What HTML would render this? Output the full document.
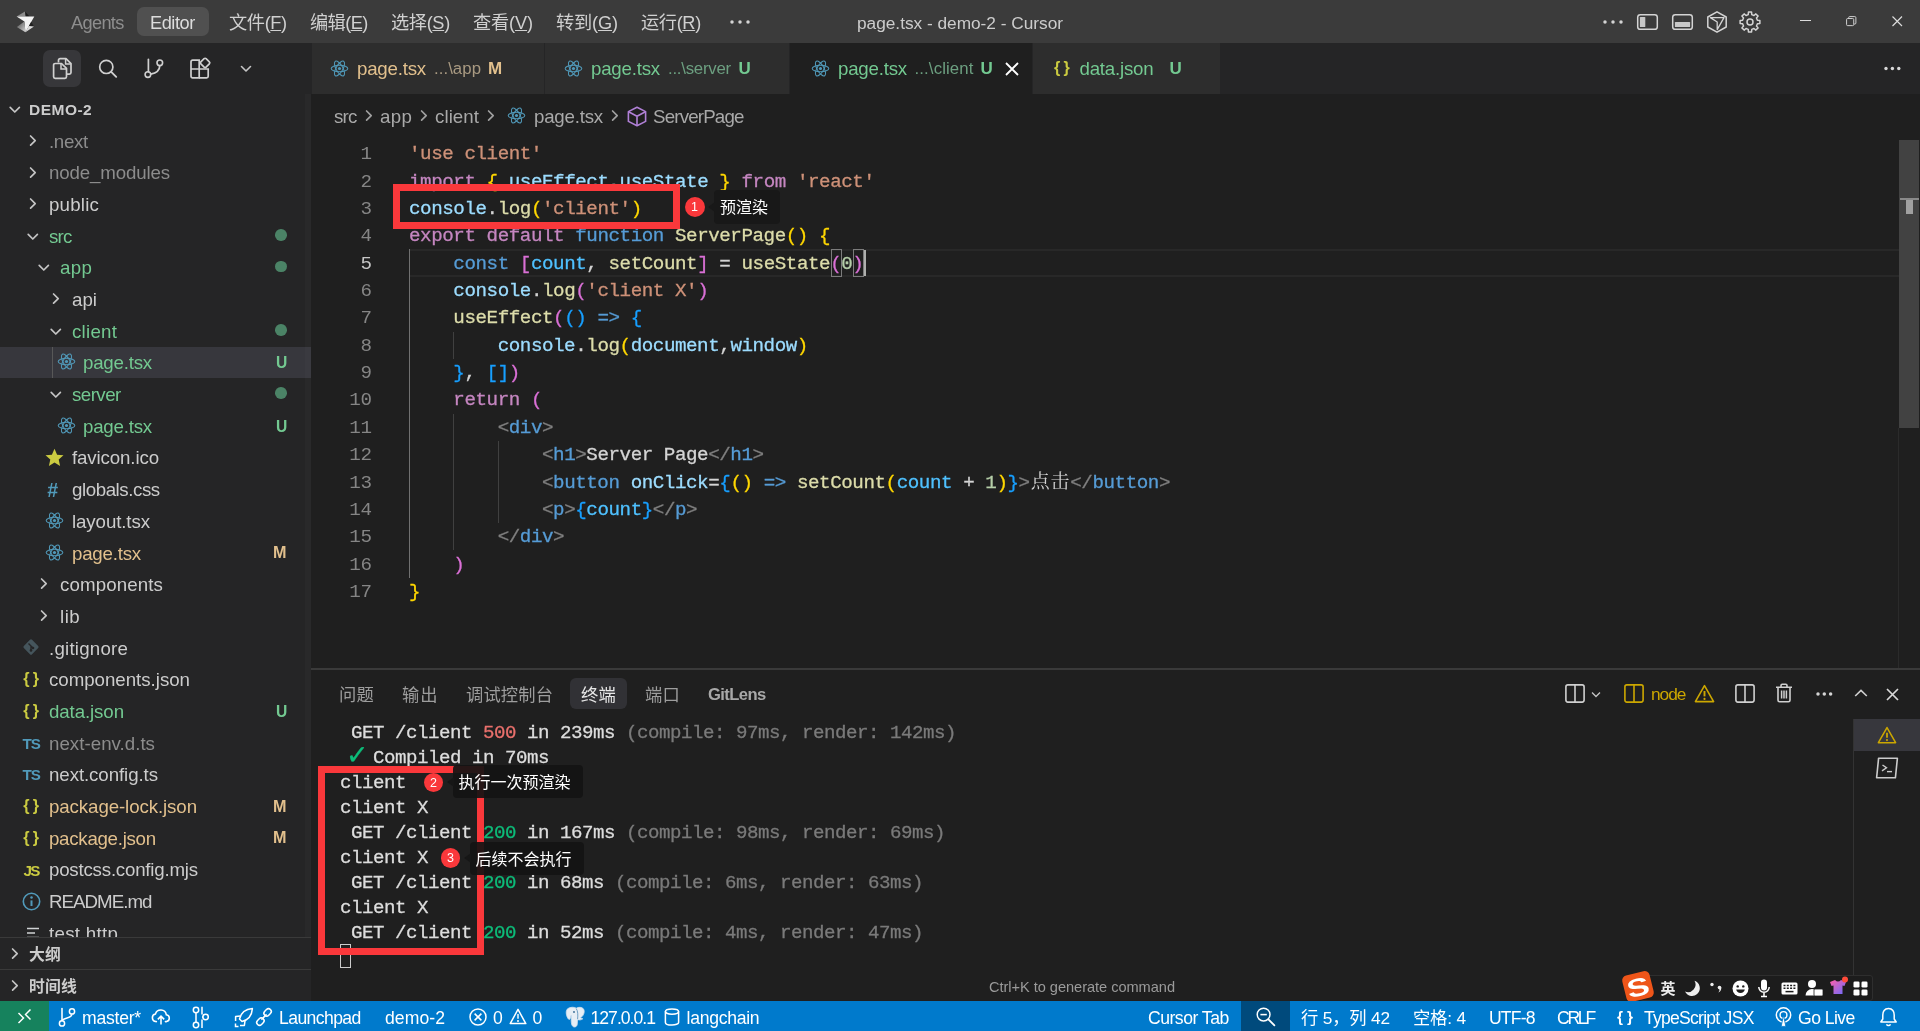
<!DOCTYPE html>
<html lang="zh-CN"><head><meta charset="utf-8"><title>page.tsx - demo-2 - Cursor</title>
<style>
html,body{margin:0;padding:0}
body{width:1920px;height:1031px;overflow:hidden;position:relative;background:#1f1f1f;font-family:"Liberation Sans","Noto Sans CJK SC",sans-serif;color:#cccccc}
div,span,svg{position:absolute;box-sizing:border-box}
.t{white-space:pre;display:block}
svg{overflow:visible}
.code span,.term span{position:static}
.code div,.term div{white-space:pre}
.titlebar,.sidebar,.editor,.panel,.statusbar{will-change:transform}

</style></head>
<body>
<div class="titlebar" style="left:0;top:0;width:1920px;height:43px;background:#3b3b3b">
<svg style="left:0px;top:0px" width="44" height="43" viewBox="0 0 44 43" fill="none" ><defs><linearGradient id="lg1" x1="0" y1="0" x2="1" y2="1"><stop offset="0" stop-color="#4a4a4a"/><stop offset="1" stop-color="#d6d6d6"/></linearGradient></defs><path d="M25 11.5 L16.6 16.6 L26 16.6 Z" fill="#8c8c8c"/><path d="M25 11.5 L25.6 16.6 L29.5 16.6 Z" fill="#1c1c1c"/><path d="M16.6 16.4 L34.3 16.4 L30.6 23 L25.4 32.2 L24.4 21.4 Z" fill="#f4f4f4"/><path d="M24.4 21.4 L16.8 27 L25.4 32.2 Z" fill="url(#lg1)"/><path d="M31.2 21.8 L34 26.5 L28.8 26.2 Z" fill="#202020"/><path d="M28.8 26 L34 26.5 L25.4 32.2 Z" fill="#dcdcdc"/></svg>
<span class="t" style="left:71px;top:10.5px;height:25px;line-height:25px;font-size:18.2px;color:#8e8e8e;letter-spacing:-0.659px;">Agents</span>
<div style="left:137px;top:7px;width:72px;height:29px;background:#505050;border-radius:7px"></div>
<span class="t" style="left:150px;top:10.5px;height:25px;line-height:25px;font-size:18.2px;color:#dcdcdc;letter-spacing:-0.457px;">Editor</span>
<span class="t" style="left:229px;top:10.5px;height:25px;line-height:25px;font-size:18.2px;color:#d0d0d0;letter-spacing:-0.361px;">文件(<u>F</u>)</span>
<span class="t" style="left:310px;top:10.5px;height:25px;line-height:25px;font-size:18.2px;color:#d0d0d0;letter-spacing:-0.587px;">编辑(<u>E</u>)</span>
<span class="t" style="left:391px;top:10.5px;height:25px;line-height:25px;font-size:18.2px;color:#d0d0d0;letter-spacing:-0.365px;">选择(<u>S</u>)</span>
<span class="t" style="left:473px;top:10.5px;height:25px;line-height:25px;font-size:18.2px;color:#d0d0d0;letter-spacing:-0.142px;">查看(<u>V</u>)</span>
<span class="t" style="left:556px;top:10.5px;height:25px;line-height:25px;font-size:18.2px;color:#d0d0d0;letter-spacing:-0.146px;">转到(<u>G</u>)</span>
<span class="t" style="left:641px;top:10.5px;height:25px;line-height:25px;font-size:18.2px;color:#d0d0d0;letter-spacing:-0.365px;">运行(<u>R</u>)</span>
<svg style="left:730px;top:19px" width="20" height="6" viewBox="0 0 20 6" fill="none" ><circle cx="2" cy="3" r="1.75" fill="#d4d4d4"/><circle cx="10" cy="3" r="1.75" fill="#d4d4d4"/><circle cx="18" cy="3" r="1.75" fill="#d4d4d4"/></svg>
<span class="t" style="left:857px;top:11.0px;height:24px;line-height:24px;font-size:17.3px;color:#cccccc;letter-spacing:-0.020px;">page.tsx - demo-2 - Cursor</span>
<svg style="left:1603px;top:18.5px" width="20" height="6" viewBox="0 0 20 6" fill="none" ><circle cx="2" cy="3" r="1.75" fill="#d4d4d4"/><circle cx="10" cy="3" r="1.75" fill="#d4d4d4"/><circle cx="18" cy="3" r="1.75" fill="#d4d4d4"/></svg>
<svg style="left:1637px;top:14px" width="21" height="16" viewBox="0 0 21 16" fill="none" ><rect x="0.7" y="0.7" width="19.6" height="14.6" rx="2.6" stroke="#d4d4d4" stroke-width="1.5"/><rect x="2.9" y="3" width="5.4" height="10" rx="0.6" fill="#c8c8c8"/></svg>
<svg style="left:1672px;top:14px" width="21" height="16" viewBox="0 0 21 16" fill="none" ><rect x="0.7" y="0.7" width="19.6" height="14.6" rx="2.6" stroke="#d4d4d4" stroke-width="1.5"/><rect x="2.9" y="8" width="15.2" height="5" rx="0.6" fill="#c8c8c8"/></svg>
<svg style="left:1706px;top:11px" width="22" height="22" viewBox="0 0 22 22" fill="none" ><path d="M11 0.8 L20.2 6 L20.2 16 L11 21.2 L1.8 16 L1.8 6 Z" stroke="#d4d4d4" stroke-width="1.5" stroke-linejoin="round"/><path d="M4.4 6.6 L18 6.6 L11.2 18.6 L11.2 11 Z" stroke="#d4d4d4" stroke-width="1.3" stroke-linejoin="round"/></svg>
<svg style="left:1739px;top:10.5px" width="22" height="22" viewBox="0 0 22 22" fill="none" ><path d="M9.23 3.61 L9.44 1.12 L12.56 1.12 L12.77 3.61 L14.97 4.52 L16.88 2.91 L19.09 5.12 L17.48 7.03 L18.39 9.23 L20.88 9.44 L20.88 12.56 L18.39 12.77 L17.48 14.97 L19.09 16.88 L16.88 19.09 L14.97 17.48 L12.77 18.39 L12.56 20.88 L9.44 20.88 L9.23 18.39 L7.03 17.48 L5.12 19.09 L2.91 16.88 L4.52 14.97 L3.61 12.77 L1.12 12.56 L1.12 9.44 L3.61 9.23 L4.52 7.03 L2.91 5.12 L5.12 2.91 L7.03 4.52 Z" stroke="#d4d4d4" stroke-width="1.5" stroke-linejoin="round"/><circle cx="11" cy="11" r="3" stroke="#d4d4d4" stroke-width="1.5"/></svg>
<div style="left:1800px;top:20px;width:10.5px;height:1.1px;background:#dcdcdc;"></div>
<svg style="left:1845.5px;top:15.8px" width="10.8" height="10.8" viewBox="0 0 13 13" fill="none" ><rect x="0.7" y="3" width="8.6" height="8.6" rx="1.3" stroke="#cfcfcf" stroke-width="1.2"/><path d="M3.2 3 V2 a1.3 1.3 0 0 1 1.3 -1.3 H10.6 a1.3 1.3 0 0 1 1.3 1.3 V8.4 a1.3 1.3 0 0 1 -1.3 1.3 H9.6" stroke="#cfcfcf" stroke-width="1.2"/></svg>
<svg style="left:1892px;top:16px" width="10.5" height="10.5" viewBox="0 0 10.5 10.5" fill="none" ><path d="M0.5 0.5 L10 10 M10 0.5 L0.5 10" stroke="#dcdcdc" stroke-width="1.15"/></svg>
</div>
<div class="sidebar" style="left:0;top:43px;width:311px;height:958px;background:#252526">
<div style="left:43px;top:7px;width:38px;height:37px;background:#37373a;border-radius:7px"></div>
<svg style="left:51px;top:14px" width="22" height="23" viewBox="0 0 22 23" fill="none" ><path d="M7.5 5.5 V3.2 a1.6 1.6 0 0 1 1.6 -1.6 H15 L20 6.6 V15.6 a1.6 1.6 0 0 1 -1.6 1.6 H16" stroke="#d0d0d0" stroke-width="1.7" stroke-linejoin="round"/><path d="M14.6 1.8 V7 H19.8" stroke="#d0d0d0" stroke-width="1.5"/><path d="M2.6 8.1 a1.6 1.6 0 0 1 1.6 -1.6 H10.5 L15.5 11.4 V19.8 a1.6 1.6 0 0 1 -1.6 1.6 H4.2 a1.6 1.6 0 0 1 -1.6 -1.6 Z" stroke="#d0d0d0" stroke-width="1.7" stroke-linejoin="round"/><path d="M10 6.8 V12 H15.2" stroke="#d0d0d0" stroke-width="1.5"/></svg>
<svg style="left:96px;top:13px" width="24" height="24" viewBox="0 0 24 24" fill="none" ><circle cx="10.3" cy="10.9" r="6.6" stroke="#d0d0d0" stroke-width="1.7"/><path d="M15.2 15.8 L20.2 20.8" stroke="#d0d0d0" stroke-width="1.9" stroke-linecap="round"/></svg>
<svg style="left:140px;top:13px" width="26" height="26" viewBox="0 0 26 26" fill="none" ><circle cx="7.9" cy="18.6" r="2.8" stroke="#d0d0d0" stroke-width="1.6"/><circle cx="19.8" cy="6.8" r="2.8" stroke="#d0d0d0" stroke-width="1.6"/><path d="M8.4 3.4 V15.8" stroke="#d0d0d0" stroke-width="1.7" stroke-linecap="round"/><path d="M19.8 9.6 C19.8 15 15 17.4 10.7 18.2" stroke="#d0d0d0" stroke-width="1.7"/></svg>
<svg style="left:189px;top:14px" width="23" height="23" viewBox="0 0 23 23" fill="none" ><path d="M2 4.8 a1.6 1.6 0 0 1 1.6 -1.6 H10.2 V20.8 H3.6 a1.6 1.6 0 0 1 -1.6 -1.6 Z" stroke="#d0d0d0" stroke-width="1.7"/><path d="M2 12 H19.2 V19.2 a1.6 1.6 0 0 1 -1.6 1.6 H10.2" stroke="#d0d0d0" stroke-width="1.7"/><rect x="12.4" y="2.2" width="7.4" height="7.4" rx="1.4" transform="rotate(45 16.1 5.9)" stroke="#d0d0d0" stroke-width="1.7"/></svg>
<svg style="left:240px;top:21px" width="12" height="10" viewBox="0 0 12 10" fill="none" ><path d="M1.5 2.5 L6 7 L10.5 2.5" stroke="#c5c5c5" stroke-width="1.6" stroke-linecap="round" stroke-linejoin="round"/></svg>
<div style="left:0px;top:303.6px;width:311px;height:31.68px;background:#37373d;"></div>
<div style="left:52px;top:303.6px;width:1px;height:31.68px;background:#585858;"></div>
<div style="left:0;top:51px;width:311px;height:843px;overflow:hidden"><div style="left:0;top:-51px;width:311px;height:900px">
<svg style="left:6.5px;top:59.3px" width="16" height="16" viewBox="0 0 16 16" fill="none" ><path d="M3.2 5.4 L7.8 10 L12.4 5.4" stroke="#c5c5c5" stroke-width="1.7" stroke-linecap="round" stroke-linejoin="round"/></svg>
<span class="t" style="left:29px;top:56.3px;height:22px;line-height:22px;font-size:15.5px;color:#cccccc;font-weight:700;letter-spacing:0.491px;">DEMO-2</span>
<svg style="left:24.9px;top:89.88000000000001px" width="16" height="16" viewBox="0 0 16 16" fill="none" ><path d="M5.6 3 L10.2 7.6 L5.6 12.2" stroke="#c5c5c5" stroke-width="1.7" stroke-linecap="round" stroke-linejoin="round"/></svg>
<span class="t" style="left:49px;top:85.68px;height:26px;line-height:26px;font-size:18.72px;color:#8c8c8c;letter-spacing:-0.347px;">.next</span>
<svg style="left:24.9px;top:121.56px" width="16" height="16" viewBox="0 0 16 16" fill="none" ><path d="M5.6 3 L10.2 7.6 L5.6 12.2" stroke="#c5c5c5" stroke-width="1.7" stroke-linecap="round" stroke-linejoin="round"/></svg>
<span class="t" style="left:49px;top:117.36px;height:26px;line-height:26px;font-size:18.72px;color:#8c8c8c;letter-spacing:-0.148px;">node_modules</span>
<svg style="left:24.9px;top:153.23999999999998px" width="16" height="16" viewBox="0 0 16 16" fill="none" ><path d="M5.6 3 L10.2 7.6 L5.6 12.2" stroke="#c5c5c5" stroke-width="1.7" stroke-linecap="round" stroke-linejoin="round"/></svg>
<span class="t" style="left:49px;top:149.04px;height:26px;line-height:26px;font-size:18.72px;color:#cccccc;letter-spacing:0.205px;">public</span>
<svg style="left:24.9px;top:185.52px" width="16" height="16" viewBox="0 0 16 16" fill="none" ><path d="M3.2 5.4 L7.8 10 L12.4 5.4" stroke="#c5c5c5" stroke-width="1.7" stroke-linecap="round" stroke-linejoin="round"/></svg>
<span class="t" style="left:49px;top:180.72px;height:26px;line-height:26px;font-size:18.72px;color:#73c991;letter-spacing:-0.775px;">src</span>
<div style="left:275.2px;top:186.01999999999998px;width:11.6px;height:11.6px;border-radius:50%;background:#4b8366"></div>
<svg style="left:36.4px;top:217.20000000000002px" width="16" height="16" viewBox="0 0 16 16" fill="none" ><path d="M3.2 5.4 L7.8 10 L12.4 5.4" stroke="#c5c5c5" stroke-width="1.7" stroke-linecap="round" stroke-linejoin="round"/></svg>
<span class="t" style="left:60px;top:212.4px;height:26px;line-height:26px;font-size:18.72px;color:#73c991;letter-spacing:0.312px;">app</span>
<div style="left:275.2px;top:217.7px;width:11.6px;height:11.6px;border-radius:50%;background:#4b8366"></div>
<svg style="left:47.9px;top:248.27999999999997px" width="16" height="16" viewBox="0 0 16 16" fill="none" ><path d="M5.6 3 L10.2 7.6 L5.6 12.2" stroke="#c5c5c5" stroke-width="1.7" stroke-linecap="round" stroke-linejoin="round"/></svg>
<span class="t" style="left:72px;top:244.08px;height:26px;line-height:26px;font-size:18.72px;color:#cccccc;letter-spacing:0.013px;">api</span>
<svg style="left:47.9px;top:280.56px" width="16" height="16" viewBox="0 0 16 16" fill="none" ><path d="M3.2 5.4 L7.8 10 L12.4 5.4" stroke="#c5c5c5" stroke-width="1.7" stroke-linecap="round" stroke-linejoin="round"/></svg>
<span class="t" style="left:72px;top:275.76px;height:26px;line-height:26px;font-size:18.72px;color:#73c991;letter-spacing:0.241px;">client</span>
<div style="left:275.2px;top:281.06px;width:11.6px;height:11.6px;border-radius:50%;background:#4b8366"></div>
<svg style="left:56.5px;top:309.44px" width="19.0" height="19.0" viewBox="0 0 24 24" fill="none" ><ellipse cx="12" cy="12" rx="10.5" ry="4.2" transform="rotate(0 12 12)" stroke="#519aba" stroke-width="1.3"/><ellipse cx="12" cy="12" rx="10.5" ry="4.2" transform="rotate(60 12 12)" stroke="#519aba" stroke-width="1.3"/><ellipse cx="12" cy="12" rx="10.5" ry="4.2" transform="rotate(120 12 12)" stroke="#519aba" stroke-width="1.3"/><circle cx="12" cy="12" r="2" fill="#519aba"/></svg>
<span class="t" style="left:83px;top:307.44px;height:26px;line-height:26px;font-size:18.72px;color:#73c991;letter-spacing:-0.227px;">page.tsx</span>
<span class="t" style="left:275.5px;top:308.24px;height:24px;line-height:24px;font-size:17px;color:#73c991;font-weight:700;transform:scaleX(.92);transform-origin:0 0;">U</span>
<svg style="left:47.9px;top:343.92px" width="16" height="16" viewBox="0 0 16 16" fill="none" ><path d="M3.2 5.4 L7.8 10 L12.4 5.4" stroke="#c5c5c5" stroke-width="1.7" stroke-linecap="round" stroke-linejoin="round"/></svg>
<span class="t" style="left:72px;top:339.12px;height:26px;line-height:26px;font-size:18.72px;color:#73c991;letter-spacing:-0.540px;">server</span>
<div style="left:275.2px;top:344.42px;width:11.6px;height:11.6px;border-radius:50%;background:#4b8366"></div>
<svg style="left:56.5px;top:372.8px" width="19.0" height="19.0" viewBox="0 0 24 24" fill="none" ><ellipse cx="12" cy="12" rx="10.5" ry="4.2" transform="rotate(0 12 12)" stroke="#519aba" stroke-width="1.3"/><ellipse cx="12" cy="12" rx="10.5" ry="4.2" transform="rotate(60 12 12)" stroke="#519aba" stroke-width="1.3"/><ellipse cx="12" cy="12" rx="10.5" ry="4.2" transform="rotate(120 12 12)" stroke="#519aba" stroke-width="1.3"/><circle cx="12" cy="12" r="2" fill="#519aba"/></svg>
<span class="t" style="left:83px;top:370.8px;height:26px;line-height:26px;font-size:18.72px;color:#73c991;letter-spacing:-0.227px;">page.tsx</span>
<span class="t" style="left:275.5px;top:371.6px;height:24px;line-height:24px;font-size:17px;color:#73c991;font-weight:700;transform:scaleX(.92);transform-origin:0 0;">U</span>
<svg style="left:45px;top:404.88px" width="19" height="19" viewBox="0 0 19 19" fill="none" ><path d="M9.5 0.8 L12.1 6.7 L18.5 7.3 L13.7 11.6 L15.1 17.9 L9.5 14.6 L3.9 17.9 L5.3 11.6 L0.5 7.3 L6.9 6.7 Z" fill="#cbcb41"/></svg>
<span class="t" style="left:72px;top:402.48px;height:26px;line-height:26px;font-size:18.72px;color:#cccccc;letter-spacing:-0.131px;">favicon.ico</span>
<span class="t" style="left:47px;top:433.56px;height:27px;line-height:27px;font-size:19.5px;color:#519aba;font-weight:700;font-style:italic;">#</span>
<span class="t" style="left:72px;top:434.16px;height:26px;line-height:26px;font-size:18.72px;color:#cccccc;letter-spacing:-0.432px;">globals.css</span>
<svg style="left:44.8px;top:467.84px" width="19.0" height="19.0" viewBox="0 0 24 24" fill="none" ><ellipse cx="12" cy="12" rx="10.5" ry="4.2" transform="rotate(0 12 12)" stroke="#519aba" stroke-width="1.3"/><ellipse cx="12" cy="12" rx="10.5" ry="4.2" transform="rotate(60 12 12)" stroke="#519aba" stroke-width="1.3"/><ellipse cx="12" cy="12" rx="10.5" ry="4.2" transform="rotate(120 12 12)" stroke="#519aba" stroke-width="1.3"/><circle cx="12" cy="12" r="2" fill="#519aba"/></svg>
<span class="t" style="left:72px;top:465.84px;height:26px;line-height:26px;font-size:18.72px;color:#cccccc;letter-spacing:-0.107px;">layout.tsx</span>
<svg style="left:44.8px;top:499.52px" width="19.0" height="19.0" viewBox="0 0 24 24" fill="none" ><ellipse cx="12" cy="12" rx="10.5" ry="4.2" transform="rotate(0 12 12)" stroke="#519aba" stroke-width="1.3"/><ellipse cx="12" cy="12" rx="10.5" ry="4.2" transform="rotate(60 12 12)" stroke="#519aba" stroke-width="1.3"/><ellipse cx="12" cy="12" rx="10.5" ry="4.2" transform="rotate(120 12 12)" stroke="#519aba" stroke-width="1.3"/><circle cx="12" cy="12" r="2" fill="#519aba"/></svg>
<span class="t" style="left:72px;top:497.52px;height:26px;line-height:26px;font-size:18.72px;color:#e2c08d;letter-spacing:-0.227px;">page.tsx</span>
<span class="t" style="left:273px;top:498.32px;height:24px;line-height:24px;font-size:17px;color:#e2c08d;font-weight:700;transform:scaleX(.95);transform-origin:0 0;">M</span>
<svg style="left:36.4px;top:533.4000000000001px" width="16" height="16" viewBox="0 0 16 16" fill="none" ><path d="M5.6 3 L10.2 7.6 L5.6 12.2" stroke="#c5c5c5" stroke-width="1.7" stroke-linecap="round" stroke-linejoin="round"/></svg>
<span class="t" style="left:60px;top:529.2px;height:26px;line-height:26px;font-size:18.72px;color:#cccccc;letter-spacing:0.117px;">components</span>
<svg style="left:36.4px;top:565.08px" width="16" height="16" viewBox="0 0 16 16" fill="none" ><path d="M5.6 3 L10.2 7.6 L5.6 12.2" stroke="#c5c5c5" stroke-width="1.7" stroke-linecap="round" stroke-linejoin="round"/></svg>
<span class="t" style="left:60px;top:560.88px;height:26px;line-height:26px;font-size:18.72px;color:#cccccc;letter-spacing:0.512px;">lib</span>
<svg style="left:22px;top:594.96px" width="18" height="18" viewBox="0 0 18 18" fill="none" ><rect x="3.2" y="3.2" width="11.6" height="11.6" rx="1.5" transform="rotate(45 9 9)" fill="#45555c"/><path d="M6.5 5.5 L11 10 M9 8 V12.5" stroke="#252526" stroke-width="1.4"/><circle cx="11" cy="10" r="1.3" fill="#252526"/><circle cx="9" cy="12.4" r="1.3" fill="#252526"/></svg>
<span class="t" style="left:49px;top:592.56px;height:26px;line-height:26px;font-size:18.72px;color:#cccccc;letter-spacing:0.215px;">.gitignore</span>
<span class="t" style="left:23.3px;top:624.34px;height:23px;line-height:23px;font-size:16.2px;color:#cbcb41;font-weight:700;letter-spacing:-0.644px;">{ }</span>
<span class="t" style="left:49px;top:624.24px;height:26px;line-height:26px;font-size:18.72px;color:#cccccc;letter-spacing:-0.028px;">components.json</span>
<span class="t" style="left:23.3px;top:656.02px;height:23px;line-height:23px;font-size:16.2px;color:#cbcb41;font-weight:700;letter-spacing:-0.644px;">{ }</span>
<span class="t" style="left:49px;top:655.92px;height:26px;line-height:26px;font-size:18.72px;color:#73c991;letter-spacing:-0.108px;">data.json</span>
<span class="t" style="left:275.5px;top:656.72px;height:24px;line-height:24px;font-size:17px;color:#73c991;font-weight:700;transform:scaleX(.92);transform-origin:0 0;">U</span>
<span class="t" style="left:22.5px;top:689.8px;height:21px;line-height:21px;font-size:15.2px;color:#519aba;font-weight:700;letter-spacing:-0.948px;">TS</span>
<span class="t" style="left:49px;top:687.6px;height:26px;line-height:26px;font-size:18.72px;color:#8c8c8c;letter-spacing:0.024px;">next-env.d.ts</span>
<span class="t" style="left:22.5px;top:721.48px;height:21px;line-height:21px;font-size:15.2px;color:#519aba;font-weight:700;letter-spacing:-0.948px;">TS</span>
<span class="t" style="left:49px;top:719.28px;height:26px;line-height:26px;font-size:18.72px;color:#cccccc;letter-spacing:-0.089px;">next.config.ts</span>
<span class="t" style="left:23.3px;top:751.06px;height:23px;line-height:23px;font-size:16.2px;color:#cbcb41;font-weight:700;letter-spacing:-0.644px;">{ }</span>
<span class="t" style="left:49px;top:750.96px;height:26px;line-height:26px;font-size:18.72px;color:#e2c08d;letter-spacing:-0.104px;">package-lock.json</span>
<span class="t" style="left:273px;top:751.76px;height:24px;line-height:24px;font-size:17px;color:#e2c08d;font-weight:700;transform:scaleX(.95);transform-origin:0 0;">M</span>
<span class="t" style="left:23.3px;top:782.74px;height:23px;line-height:23px;font-size:16.2px;color:#cbcb41;font-weight:700;letter-spacing:-0.644px;">{ }</span>
<span class="t" style="left:49px;top:782.64px;height:26px;line-height:26px;font-size:18.72px;color:#e2c08d;letter-spacing:-0.281px;">package.json</span>
<span class="t" style="left:273px;top:783.44px;height:24px;line-height:24px;font-size:17px;color:#e2c08d;font-weight:700;transform:scaleX(.95);transform-origin:0 0;">M</span>
<span class="t" style="left:23.5px;top:816.52px;height:21px;line-height:21px;font-size:15.2px;color:#cbcb41;font-weight:700;letter-spacing:-1.719px;">JS</span>
<span class="t" style="left:49px;top:814.32px;height:26px;line-height:26px;font-size:18.72px;color:#cccccc;letter-spacing:-0.217px;">postcss.config.mjs</span>
<svg style="left:22px;top:848.9px" width="19" height="19" viewBox="0 0 19 19" fill="none" ><circle cx="9.5" cy="9.5" r="8.2" stroke="#519aba" stroke-width="1.6"/><circle cx="9.5" cy="5.6" r="1.25" fill="#519aba"/><path d="M9.5 8.4 V14" stroke="#519aba" stroke-width="2"/></svg>
<span class="t" style="left:49px;top:846.0px;height:26px;line-height:26px;font-size:18.72px;color:#cccccc;letter-spacing:-0.965px;">README.md</span>
<svg style="left:27px;top:884.08px" width="13" height="12" viewBox="0 0 13 12" fill="none" ><path d="M0 1.5 H12 M0 6 H8 M0 10.5 H12" stroke="#cfd2d4" stroke-width="1.7"/></svg>
<span class="t" style="left:49px;top:877.68px;height:26px;line-height:26px;font-size:18.72px;color:#cccccc;letter-spacing:0.289px;">test.http</span>
</div></div>
<div style="left:305px;top:51px;width:6px;height:843px;background:rgba(255,255,255,0.02);"></div>
<div style="left:0px;top:894px;width:311px;height:1px;background:#3a3a3a;"></div>
<svg style="left:6.5px;top:903px" width="16" height="16" viewBox="0 0 16 16" fill="none" ><path d="M5.6 3 L10.2 7.6 L5.6 12.2" stroke="#c5c5c5" stroke-width="1.7" stroke-linecap="round" stroke-linejoin="round"/></svg>
<span class="t" style="left:29px;top:901.0px;height:22px;line-height:22px;font-size:15.84px;color:#cccccc;font-weight:700;letter-spacing:0.219px;">大纲</span>
<div style="left:0px;top:926px;width:311px;height:1px;background:#3a3a3a;"></div>
<svg style="left:6.5px;top:935px" width="16" height="16" viewBox="0 0 16 16" fill="none" ><path d="M5.6 3 L10.2 7.6 L5.6 12.2" stroke="#c5c5c5" stroke-width="1.7" stroke-linecap="round" stroke-linejoin="round"/></svg>
<span class="t" style="left:29px;top:933.0px;height:22px;line-height:22px;font-size:15.84px;color:#cccccc;font-weight:700;letter-spacing:0.200px;">时间线</span>
</div>
<div class="editor" style="left:311px;top:43px;width:1609px;height:625px;background:#1f1f1f">
<div style="left:0px;top:0px;width:1609px;height:51px;background:#252526;"></div>
<div style="left:1px;top:0px;width:908px;height:51px;background:#2d2d2d;"></div>
<div style="left:233px;top:0px;width:1px;height:51px;background:#252526;"></div>
<div style="left:478px;top:0px;width:1px;height:51px;background:#252526;"></div>
<div style="left:479px;top:0px;width:242px;height:51px;background:#1f1f1f;"></div>
<div style="left:720.5px;top:0px;width:1px;height:51px;background:#252526;"></div>
<svg style="left:19.0px;top:15.5px" width="19.0" height="19.0" viewBox="0 0 24 24" fill="none" ><ellipse cx="12" cy="12" rx="10.5" ry="4.2" transform="rotate(0 12 12)" stroke="#519aba" stroke-width="1.3"/><ellipse cx="12" cy="12" rx="10.5" ry="4.2" transform="rotate(60 12 12)" stroke="#519aba" stroke-width="1.3"/><ellipse cx="12" cy="12" rx="10.5" ry="4.2" transform="rotate(120 12 12)" stroke="#519aba" stroke-width="1.3"/><circle cx="12" cy="12" r="2" fill="#519aba"/></svg>
<span class="t" style="left:46px;top:12.5px;height:26px;line-height:26px;font-size:18.72px;color:#e2c08d;letter-spacing:-0.227px;">page.tsx</span>
<span class="t" style="left:123px;top:14.0px;height:24px;line-height:24px;font-size:16.8px;color:#a99a82;letter-spacing:0.053px;">...\app</span>
<span class="t" style="left:177px;top:14.0px;height:24px;line-height:24px;font-size:17px;color:#e2c08d;font-weight:700;">M</span>
<svg style="left:253.0px;top:15.5px" width="19.0" height="19.0" viewBox="0 0 24 24" fill="none" ><ellipse cx="12" cy="12" rx="10.5" ry="4.2" transform="rotate(0 12 12)" stroke="#519aba" stroke-width="1.3"/><ellipse cx="12" cy="12" rx="10.5" ry="4.2" transform="rotate(60 12 12)" stroke="#519aba" stroke-width="1.3"/><ellipse cx="12" cy="12" rx="10.5" ry="4.2" transform="rotate(120 12 12)" stroke="#519aba" stroke-width="1.3"/><circle cx="12" cy="12" r="2" fill="#519aba"/></svg>
<span class="t" style="left:280px;top:12.5px;height:26px;line-height:26px;font-size:18.72px;color:#73c991;letter-spacing:-0.227px;">page.tsx</span>
<span class="t" style="left:357px;top:14.0px;height:24px;line-height:24px;font-size:16.8px;color:#6c9f80;letter-spacing:-0.240px;">...\server</span>
<span class="t" style="left:427.5px;top:14.0px;height:24px;line-height:24px;font-size:17px;color:#73c991;font-weight:700;">U</span>
<svg style="left:499.5px;top:15.5px" width="19.0" height="19.0" viewBox="0 0 24 24" fill="none" ><ellipse cx="12" cy="12" rx="10.5" ry="4.2" transform="rotate(0 12 12)" stroke="#519aba" stroke-width="1.3"/><ellipse cx="12" cy="12" rx="10.5" ry="4.2" transform="rotate(60 12 12)" stroke="#519aba" stroke-width="1.3"/><ellipse cx="12" cy="12" rx="10.5" ry="4.2" transform="rotate(120 12 12)" stroke="#519aba" stroke-width="1.3"/><circle cx="12" cy="12" r="2" fill="#519aba"/></svg>
<span class="t" style="left:527px;top:12.5px;height:26px;line-height:26px;font-size:18.72px;color:#73c991;letter-spacing:-0.227px;">page.tsx</span>
<span class="t" style="left:603.5px;top:14.0px;height:24px;line-height:24px;font-size:16.8px;color:#6c9f80;letter-spacing:0.123px;">...\client</span>
<span class="t" style="left:669.5px;top:14.0px;height:24px;line-height:24px;font-size:17px;color:#73c991;font-weight:700;">U</span>
<svg style="left:694px;top:19px" width="14" height="14" viewBox="0 0 14 14" fill="none" ><path d="M1 1 L13 13 M13 1 L1 13" stroke="#ffffff" stroke-width="1.8"/></svg>
<span class="t" style="left:743px;top:13.0px;height:23px;line-height:23px;font-size:16.2px;color:#cbcb41;font-weight:700;letter-spacing:-0.644px;">{ }</span>
<span class="t" style="left:768.5px;top:12.5px;height:26px;line-height:26px;font-size:18.72px;color:#73c991;letter-spacing:-0.226px;">data.json</span>
<span class="t" style="left:858.5px;top:14.0px;height:24px;line-height:24px;font-size:17px;color:#73c991;font-weight:700;">U</span>
<svg style="left:1573px;top:23px" width="18" height="5" viewBox="0 0 18 5" fill="none" ><circle cx="2" cy="2.5" r="1.7" fill="#d8d8d8"/><circle cx="8.4" cy="2.5" r="1.7" fill="#d8d8d8"/><circle cx="14.8" cy="2.5" r="1.7" fill="#d8d8d8"/></svg>
<span class="t" style="left:23px;top:60.5px;height:26px;line-height:26px;font-size:18.72px;color:#a9a9a9;letter-spacing:-0.775px;">src</span>
<svg style="left:49.5px;top:65.0px" width="16" height="16" viewBox="0 0 16 16" fill="none" ><path d="M5.6 3 L10.2 7.6 L5.6 12.2" stroke="#a0a0a0" stroke-width="1.7" stroke-linecap="round" stroke-linejoin="round"/></svg>
<span class="t" style="left:69px;top:60.5px;height:26px;line-height:26px;font-size:18.72px;color:#a9a9a9;letter-spacing:0.312px;">app</span>
<svg style="left:104.5px;top:65.0px" width="16" height="16" viewBox="0 0 16 16" fill="none" ><path d="M5.6 3 L10.2 7.6 L5.6 12.2" stroke="#a0a0a0" stroke-width="1.7" stroke-linecap="round" stroke-linejoin="round"/></svg>
<span class="t" style="left:124px;top:60.5px;height:26px;line-height:26px;font-size:18.72px;color:#a9a9a9;letter-spacing:0.060px;">client</span>
<svg style="left:172px;top:65.0px" width="16" height="16" viewBox="0 0 16 16" fill="none" ><path d="M5.6 3 L10.2 7.6 L5.6 12.2" stroke="#a0a0a0" stroke-width="1.7" stroke-linecap="round" stroke-linejoin="round"/></svg>
<svg style="left:195.5px;top:63.0px" width="19.0" height="19.0" viewBox="0 0 24 24" fill="none" ><ellipse cx="12" cy="12" rx="10.5" ry="4.2" transform="rotate(0 12 12)" stroke="#519aba" stroke-width="1.3"/><ellipse cx="12" cy="12" rx="10.5" ry="4.2" transform="rotate(60 12 12)" stroke="#519aba" stroke-width="1.3"/><ellipse cx="12" cy="12" rx="10.5" ry="4.2" transform="rotate(120 12 12)" stroke="#519aba" stroke-width="1.3"/><circle cx="12" cy="12" r="2" fill="#519aba"/></svg>
<span class="t" style="left:223px;top:60.5px;height:26px;line-height:26px;font-size:18.72px;color:#a9a9a9;letter-spacing:-0.227px;">page.tsx</span>
<svg style="left:295.5px;top:65.0px" width="16" height="16" viewBox="0 0 16 16" fill="none" ><path d="M5.6 3 L10.2 7.6 L5.6 12.2" stroke="#a0a0a0" stroke-width="1.7" stroke-linecap="round" stroke-linejoin="round"/></svg>
<svg style="left:316px;top:63px" width="20" height="21" viewBox="0 0 20 21" fill="none" ><path d="M10 1.2 L18.6 5.6 V15.4 L10 19.8 L1.4 15.4 V5.6 Z" stroke="#b180d7" stroke-width="1.6" stroke-linejoin="round"/><path d="M1.6 5.8 L10 10.2 L18.4 5.8 M10 10.2 V19.6" stroke="#b180d7" stroke-width="1.6" stroke-linejoin="round"/></svg>
<span class="t" style="left:342px;top:60.5px;height:26px;line-height:26px;font-size:18.72px;color:#a9a9a9;letter-spacing:-0.819px;">ServerPage</span>
<div style="left:98px;top:206.44px;width:1490px;height:2px;background:#282828;"></div>
<div style="left:98px;top:231.8px;width:1490px;height:2px;background:#282828;"></div>
<div style="left:98px;top:206.44px;width:1px;height:328.32px;background:#707070;"></div>
<div style="left:142px;top:288.52px;width:1px;height:27.36px;background:#404040;"></div>
<div style="left:142px;top:370.6px;width:1px;height:136.8px;background:#404040;"></div>
<div style="left:187px;top:397.96px;width:1px;height:82.08px;background:#404040;"></div>
<span class="t" style="left:49.42px;top:98.2px;height:27.36px;line-height:27.36px;font-size:19.2px;color:#858585;font-family:'Liberation Mono','Noto Sans CJK SC',monospace;letter-spacing:-0.436px;">1</span>
<span class="t" style="left:49.42px;top:125.56px;height:27.36px;line-height:27.36px;font-size:19.2px;color:#858585;font-family:'Liberation Mono','Noto Sans CJK SC',monospace;letter-spacing:-0.436px;">2</span>
<span class="t" style="left:49.42px;top:152.92px;height:27.36px;line-height:27.36px;font-size:19.2px;color:#858585;font-family:'Liberation Mono','Noto Sans CJK SC',monospace;letter-spacing:-0.436px;">3</span>
<span class="t" style="left:49.42px;top:180.28px;height:27.36px;line-height:27.36px;font-size:19.2px;color:#858585;font-family:'Liberation Mono','Noto Sans CJK SC',monospace;letter-spacing:-0.436px;">4</span>
<span class="t" style="left:49.42px;top:207.64px;height:27.36px;line-height:27.36px;font-size:19.2px;color:#c6c6c6;font-family:'Liberation Mono','Noto Sans CJK SC',monospace;letter-spacing:-0.436px;">5</span>
<span class="t" style="left:49.42px;top:235.0px;height:27.36px;line-height:27.36px;font-size:19.2px;color:#858585;font-family:'Liberation Mono','Noto Sans CJK SC',monospace;letter-spacing:-0.436px;">6</span>
<span class="t" style="left:49.42px;top:262.36px;height:27.36px;line-height:27.36px;font-size:19.2px;color:#858585;font-family:'Liberation Mono','Noto Sans CJK SC',monospace;letter-spacing:-0.436px;">7</span>
<span class="t" style="left:49.42px;top:289.72px;height:27.36px;line-height:27.36px;font-size:19.2px;color:#858585;font-family:'Liberation Mono','Noto Sans CJK SC',monospace;letter-spacing:-0.436px;">8</span>
<span class="t" style="left:49.42px;top:317.08px;height:27.36px;line-height:27.36px;font-size:19.2px;color:#858585;font-family:'Liberation Mono','Noto Sans CJK SC',monospace;letter-spacing:-0.436px;">9</span>
<span class="t" style="left:38.33px;top:344.44px;height:27.36px;line-height:27.36px;font-size:19.2px;color:#858585;font-family:'Liberation Mono','Noto Sans CJK SC',monospace;letter-spacing:-0.436px;">10</span>
<span class="t" style="left:38.33px;top:371.8px;height:27.36px;line-height:27.36px;font-size:19.2px;color:#858585;font-family:'Liberation Mono','Noto Sans CJK SC',monospace;letter-spacing:-0.436px;">11</span>
<span class="t" style="left:38.33px;top:399.16px;height:27.36px;line-height:27.36px;font-size:19.2px;color:#858585;font-family:'Liberation Mono','Noto Sans CJK SC',monospace;letter-spacing:-0.436px;">12</span>
<span class="t" style="left:38.33px;top:426.52px;height:27.36px;line-height:27.36px;font-size:19.2px;color:#858585;font-family:'Liberation Mono','Noto Sans CJK SC',monospace;letter-spacing:-0.436px;">13</span>
<span class="t" style="left:38.33px;top:453.88px;height:27.36px;line-height:27.36px;font-size:19.2px;color:#858585;font-family:'Liberation Mono','Noto Sans CJK SC',monospace;letter-spacing:-0.436px;">14</span>
<span class="t" style="left:38.33px;top:481.24px;height:27.36px;line-height:27.36px;font-size:19.2px;color:#858585;font-family:'Liberation Mono','Noto Sans CJK SC',monospace;letter-spacing:-0.436px;">15</span>
<span class="t" style="left:38.33px;top:508.6px;height:27.36px;line-height:27.36px;font-size:19.2px;color:#858585;font-family:'Liberation Mono','Noto Sans CJK SC',monospace;letter-spacing:-0.436px;">16</span>
<span class="t" style="left:38.33px;top:535.96px;height:27.36px;line-height:27.36px;font-size:19.2px;color:#858585;font-family:'Liberation Mono','Noto Sans CJK SC',monospace;letter-spacing:-0.436px;">17</span>
<div class="code" style="left:98px;top:98.2px;width:1400px;height:480px;font-family:'Liberation Mono','Noto Sans CJK SC',monospace;font-size:19.2px;letter-spacing:-0.436px;-webkit-text-stroke:0.3px;color:#d4d4d4"><div style="left:0;top:0.0px;height:27.36px;line-height:27.36px"><span style="color:#ce9178">&#x27;use client&#x27;</span></div><div style="left:0;top:27.36px;height:27.36px;line-height:27.36px"><span style="color:#c586c0">import</span> <span style="color:#ffd700">{</span> <span style="color:#9cdcfe">useEffect</span><span style="color:#d4d4d4">,</span><span style="color:#9cdcfe">useState</span> <span style="color:#ffd700">}</span> <span style="color:#c586c0">from</span> <span style="color:#ce9178">&#x27;react&#x27;</span></div><div style="left:0;top:54.72px;height:27.36px;line-height:27.36px"><span style="color:#9cdcfe">console</span><span style="color:#d4d4d4">.</span><span style="color:#dcdcaa">log</span><span style="color:#ffd700">(</span><span style="color:#ce9178">&#x27;client&#x27;</span><span style="color:#ffd700">)</span></div><div style="left:0;top:82.08px;height:27.36px;line-height:27.36px"><span style="color:#c586c0">export</span> <span style="color:#c586c0">default</span> <span style="color:#569cd6">function</span> <span style="color:#dcdcaa">ServerPage</span><span style="color:#ffd700">()</span> <span style="color:#ffd700">{</span></div><div style="left:0;top:109.44px;height:27.36px;line-height:27.36px">    <span style="color:#569cd6">const</span> <span style="color:#da70d6">[</span><span style="color:#4fc1ff">count</span><span style="color:#d4d4d4">, </span><span style="color:#dcdcaa">setCount</span><span style="color:#da70d6">]</span><span style="color:#d4d4d4"> = </span><span style="color:#dcdcaa">useState</span><span style="color:#da70d6">(</span><span style="color:#b5cea8">0</span><span style="color:#da70d6">)</span></div><div style="left:0;top:136.8px;height:27.36px;line-height:27.36px">    <span style="color:#9cdcfe">console</span><span style="color:#d4d4d4">.</span><span style="color:#dcdcaa">log</span><span style="color:#da70d6">(</span><span style="color:#ce9178">&#x27;client X&#x27;</span><span style="color:#da70d6">)</span></div><div style="left:0;top:164.16px;height:27.36px;line-height:27.36px">    <span style="color:#dcdcaa">useEffect</span><span style="color:#da70d6">(</span><span style="color:#179fff">()</span> <span style="color:#569cd6">=&gt;</span> <span style="color:#179fff">{</span></div><div style="left:0;top:191.52px;height:27.36px;line-height:27.36px">        <span style="color:#9cdcfe">console</span><span style="color:#d4d4d4">.</span><span style="color:#dcdcaa">log</span><span style="color:#ffd700">(</span><span style="color:#9cdcfe">document</span><span style="color:#d4d4d4">,</span><span style="color:#9cdcfe">window</span><span style="color:#ffd700">)</span></div><div style="left:0;top:218.88px;height:27.36px;line-height:27.36px">    <span style="color:#179fff">}</span><span style="color:#d4d4d4">, </span><span style="color:#179fff">[]</span><span style="color:#da70d6">)</span></div><div style="left:0;top:246.24px;height:27.36px;line-height:27.36px">    <span style="color:#c586c0">return</span> <span style="color:#da70d6">(</span></div><div style="left:0;top:273.6px;height:27.36px;line-height:27.36px">        <span style="color:#808080">&lt;</span><span style="color:#569cd6">div</span><span style="color:#808080">&gt;</span></div><div style="left:0;top:300.96px;height:27.36px;line-height:27.36px">            <span style="color:#808080">&lt;</span><span style="color:#569cd6">h1</span><span style="color:#808080">&gt;</span><span style="color:#d4d4d4">Server Page</span><span style="color:#808080">&lt;/</span><span style="color:#569cd6">h1</span><span style="color:#808080">&gt;</span></div><div style="left:0;top:328.32px;height:27.36px;line-height:27.36px">            <span style="color:#808080">&lt;</span><span style="color:#569cd6">button</span> <span style="color:#9cdcfe">onClick</span><span style="color:#d4d4d4">=</span><span style="color:#179fff">{</span><span style="color:#ffd700">()</span> <span style="color:#569cd6">=&gt;</span> <span style="color:#dcdcaa">setCount</span><span style="color:#ffd700">(</span><span style="color:#4fc1ff">count</span><span style="color:#d4d4d4"> + </span><span style="color:#b5cea8">1</span><span style="color:#ffd700">)</span><span style="color:#179fff">}</span><span style="color:#808080">&gt;</span><span style="color:#d4d4d4;font-family:'Noto Serif CJK SC',serif;font-size:19px;letter-spacing:0.8px;line-height:0;-webkit-text-stroke:0;margin-left:1px">点击</span><span style="color:#808080">&lt;/</span><span style="color:#569cd6">button</span><span style="color:#808080">&gt;</span></div><div style="left:0;top:355.68px;height:27.36px;line-height:27.36px">            <span style="color:#808080">&lt;</span><span style="color:#569cd6">p</span><span style="color:#808080">&gt;</span><span style="color:#179fff">{</span><span style="color:#4fc1ff">count</span><span style="color:#179fff">}</span><span style="color:#808080">&lt;/</span><span style="color:#569cd6">p</span><span style="color:#808080">&gt;</span></div><div style="left:0;top:383.04px;height:27.36px;line-height:27.36px">        <span style="color:#808080">&lt;/</span><span style="color:#569cd6">div</span><span style="color:#808080">&gt;</span></div><div style="left:0;top:410.4px;height:27.36px;line-height:27.36px">    <span style="color:#da70d6">)</span></div><div style="left:0;top:437.76px;height:27.36px;line-height:27.36px"><span style="color:#ffd700">}</span></div></div>
<div style="left:519.6px;top:206.44px;width:11.4px;height:27.36px;border:1px solid #7c7c7c"></div>
<div style="left:541.8px;top:206.44px;width:11.4px;height:27.36px;border:1px solid #7c7c7c"></div>
<div style="left:553px;top:207.44px;width:2px;height:25.36px;background:#aeafad;"></div>
<div style="left:1587px;top:385px;width:1px;height:240px;background:#2b2b2b;"></div>
<div style="left:1588px;top:97px;width:20px;height:288px;background:#424242;"></div>
<div style="left:1589px;top:155px;width:19px;height:2px;background:#8a8a8a;"></div>
<div style="left:1595px;top:157px;width:7px;height:14px;background:#a0a0a0;"></div>
<div style="left:82px;top:141.3px;width:287px;height:44.7px;border:7px solid #fa383b"></div>
<div style="left:374px;top:154px;width:20px;height:20px;border-radius:50%;background:#fa383b"></div>
<span class="t" style="left:380px;top:155.0px;height:18px;line-height:18px;font-size:12.5px;color:#ffffff;">1</span>
<div style="left:403px;top:147px;width:66px;height:34px;background:#181818;border-radius:4px"></div>
<svg style="left:397px;top:159px" width="7" height="10" viewBox="0 0 7 10" fill="none" ><path d="M0 5 L7 0 V10 Z" fill="#181818"/></svg>
<span class="t" style="left:409px;top:154.0px;height:22px;line-height:22px;font-size:16px;color:#ffffff;letter-spacing:-0.006px;">预渲染</span>
</div>
<div class="panel" style="left:311px;top:668px;width:1609px;height:333px;background:#1f1f1f">
<div style="left:0px;top:0px;width:1609px;height:1.5px;background:#3a3a3a;"></div>
<span class="t" style="left:28px;top:14.5px;height:24px;line-height:24px;font-size:17.3px;color:#9d9d9d;letter-spacing:0.281px;">问题</span>
<span class="t" style="left:91px;top:14.5px;height:24px;line-height:24px;font-size:17.3px;color:#9d9d9d;letter-spacing:0.948px;">输出</span>
<span class="t" style="left:155px;top:14.5px;height:24px;line-height:24px;font-size:17.3px;color:#9d9d9d;letter-spacing:0.128px;">调试控制台</span>
<div style="left:259px;top:10px;width:57px;height:31px;background:#313135;border-radius:6px"></div>
<span class="t" style="left:270px;top:14.5px;height:24px;line-height:24px;font-size:17.3px;color:#e7e7e7;letter-spacing:0.281px;">终端</span>
<span class="t" style="left:334px;top:14.5px;height:24px;line-height:24px;font-size:17.3px;color:#9d9d9d;letter-spacing:0.281px;">端口</span>
<span class="t" style="left:397px;top:14.8px;height:23px;line-height:23px;font-size:16.6px;color:#a8a8a8;font-weight:700;letter-spacing:-0.582px;">GitLens</span>
<svg style="left:1254px;top:16px" width="20" height="19" viewBox="0 0 20 19" fill="none" ><rect x="0.9" y="0.9" width="18.2" height="17.2" rx="2" stroke="#d0d0d0" stroke-width="1.6"/><path d="M10 1 V18" stroke="#d0d0d0" stroke-width="1.6"/></svg>
<svg style="left:1280px;top:23px" width="10" height="7" viewBox="0 0 10 7" fill="none" ><path d="M1 1.5 L5 5.5 L9 1.5" stroke="#c5c5c5" stroke-width="1.3"/></svg>
<svg style="left:1313px;top:16px" width="20" height="19" viewBox="0 0 20 19" fill="none" ><rect x="0.9" y="0.9" width="18.2" height="17.2" rx="2" stroke="#cca700" stroke-width="1.6"/><path d="M10 1 V18" stroke="#cca700" stroke-width="1.6"/></svg>
<span class="t" style="left:1340px;top:13.5px;height:24px;line-height:24px;font-size:17.3px;color:#cca700;letter-spacing:-0.987px;">node</span>
<svg style="left:1383px;top:16px" width="21" height="19" viewBox="0 0 21 19" fill="none" ><path d="M10.5 1.6 L19.6 17.6 H1.4 Z" stroke="#cca700" stroke-width="1.6" stroke-linejoin="round"/><path d="M10.5 7 V12.4" stroke="#cca700" stroke-width="1.9"/><circle cx="10.5" cy="14.9" r="1.1" fill="#cca700"/></svg>
<svg style="left:1424px;top:16px" width="20" height="19" viewBox="0 0 20 19" fill="none" ><rect x="0.9" y="0.9" width="18.2" height="17.2" rx="2" stroke="#d0d0d0" stroke-width="1.6"/><path d="M10 1 V18" stroke="#d0d0d0" stroke-width="1.6"/></svg>
<svg style="left:1464px;top:15px" width="18" height="20" viewBox="0 0 18 20" fill="none" ><path d="M1 4.2 H17 M6 4 V2.4 a1.2 1.2 0 0 1 1.2 -1.2 H10.8 a1.2 1.2 0 0 1 1.2 1.2 V4" stroke="#d0d0d0" stroke-width="1.6"/><path d="M3 4.5 V17.2 a1.6 1.6 0 0 0 1.6 1.6 H13.4 a1.6 1.6 0 0 0 1.6 -1.6 V4.5" stroke="#d0d0d0" stroke-width="1.6"/><path d="M6.6 7.5 V15.5 M9 7.5 V15.5 M11.4 7.5 V15.5" stroke="#d0d0d0" stroke-width="1.5"/></svg>
<svg style="left:1505px;top:24px" width="17" height="4" viewBox="0 0 17 4" fill="none" ><circle cx="2" cy="2" r="1.75" fill="#d4d4d4"/><circle cx="8.3" cy="2" r="1.75" fill="#d4d4d4"/><circle cx="14.6" cy="2" r="1.75" fill="#d4d4d4"/></svg>
<svg style="left:1543px;top:21px" width="14" height="8" viewBox="0 0 14 8" fill="none" ><path d="M1.2 7 L7 1.4 L12.8 7" stroke="#d0d0d0" stroke-width="1.6"/></svg>
<svg style="left:1575px;top:20px" width="13" height="13" viewBox="0 0 13 13" fill="none" ><path d="M1 1 L12 12 M12 1 L1 12" stroke="#d8d8d8" stroke-width="1.7"/></svg>
<div style="left:1542px;top:51px;width:1px;height:257px;background:#333333;"></div>
<div style="left:1543px;top:51px;width:66px;height:32px;background:#37373d;"></div>
<svg style="left:1566px;top:57.5px" width="20" height="18" viewBox="0 0 21 19" fill="none" ><path d="M10.5 1.6 L19.6 17.6 H1.4 Z" stroke="#cca700" stroke-width="1.6" stroke-linejoin="round"/><path d="M10.5 7 V12.4" stroke="#cca700" stroke-width="1.9"/><circle cx="10.5" cy="14.9" r="1.1" fill="#cca700"/></svg>
<svg style="left:1564px;top:89px" width="24" height="22" viewBox="0 0 24 22" fill="none" ><path d="M3.6 1.2 H22.4 L20.4 20.8 H1.6 Z" stroke="#cccccc" stroke-width="1.6" stroke-linejoin="round"/><path d="M7.5 8 L11.5 10.8 L7 13.8" stroke="#cccccc" stroke-width="1.4"/><path d="M12 14.6 H17" stroke="#cccccc" stroke-width="1.4"/></svg>
<div class="term" style="left:29px;top:53.4px;width:1400px;height:240px;font-family:'Liberation Mono','Noto Sans CJK SC',monospace;font-size:19.1px;letter-spacing:-0.46px;-webkit-text-stroke:0.3px;color:#dddddd"><div style="left:0;top:0px;height:25px;line-height:25px"> <span style="color:#dddddd">GET /client </span><span style="color:#e9706c">500</span><span style="color:#dddddd"> in 239ms </span><span style="color:#7a7a7a">(compile: 97ms, render: 142ms)</span></div><div style="left:0;top:25px;height:25px;line-height:25px"> <span style="color:#0dbc79;font-family:'DejaVu Sans',sans-serif;font-weight:700;font-size:27px;line-height:0;letter-spacing:0;display:inline-block;width:11px;text-indent:-5px;position:relative;top:1px">✓</span><span style="color:#dddddd"> Compiled in 70ms</span></div><div style="left:0;top:50px;height:25px;line-height:25px"><span style="color:#dddddd">client</span></div><div style="left:0;top:75px;height:25px;line-height:25px"><span style="color:#dddddd">client X</span></div><div style="left:0;top:100px;height:25px;line-height:25px"> <span style="color:#dddddd">GET /client </span><span style="color:#0dbc79">200</span><span style="color:#dddddd"> in 167ms </span><span style="color:#7a7a7a">(compile: 98ms, render: 69ms)</span></div><div style="left:0;top:125px;height:25px;line-height:25px"><span style="color:#dddddd">client X</span></div><div style="left:0;top:150px;height:25px;line-height:25px"> <span style="color:#dddddd">GET /client </span><span style="color:#0dbc79">200</span><span style="color:#dddddd"> in 68ms </span><span style="color:#7a7a7a">(compile: 6ms, render: 63ms)</span></div><div style="left:0;top:175px;height:25px;line-height:25px"><span style="color:#dddddd">client X</span></div><div style="left:0;top:200px;height:25px;line-height:25px"> <span style="color:#dddddd">GET /client </span><span style="color:#0dbc79">200</span><span style="color:#dddddd"> in 52ms </span><span style="color:#7a7a7a">(compile: 4ms, render: 47ms)</span></div></div>
<div style="left:29px;top:276px;width:11px;height:24px;border:1px solid #cccccc"></div>
<div style="left:7px;top:97.5px;width:166px;height:189px;border:7px solid #fa383b"></div>
<div style="left:112.7px;top:104.7px;width:19.6px;height:19.6px;border-radius:50%;background:#fa383b"></div>
<span class="t" style="left:118.9px;top:105.5px;height:18px;line-height:18px;font-size:12.5px;color:#ffffff;">2</span>
<div style="left:142px;top:97px;width:130px;height:33px;background:rgba(20,20,20,.92);border-radius:4px"></div>
<svg style="left:136px;top:109px" width="7" height="10" viewBox="0 0 7 10" fill="none" ><path d="M0 5 L7 0 V10 Z" fill="#161616"/></svg>
<span class="t" style="left:147.5px;top:104.2px;height:22px;line-height:22px;font-size:16px;color:#ffffff;">执行一次预渲染</span>
<div style="left:129.89999999999998px;top:180.2px;width:19.6px;height:19.6px;border-radius:50%;background:#fa383b"></div>
<span class="t" style="left:136.1px;top:181.0px;height:18px;line-height:18px;font-size:12.5px;color:#ffffff;">3</span>
<div style="left:159px;top:174px;width:114px;height:33px;background:rgba(20,20,20,.92);border-radius:4px"></div>
<svg style="left:153px;top:185px" width="7" height="10" viewBox="0 0 7 10" fill="none" ><path d="M0 5 L7 0 V10 Z" fill="#161616"/></svg>
<span class="t" style="left:164.5px;top:180.5px;height:22px;line-height:22px;font-size:16px;color:#ffffff;">后续不会执行</span>
<span class="t" style="left:678px;top:308.8px;height:20px;line-height:20px;font-size:14.6px;color:#9a9a9a;letter-spacing:-0.039px;">Ctrl+K to generate command</span>
<div style="left:1329px;top:307px;width:233px;height:26px;background:#1c1c1c;border-radius:3px;border:1px solid #2e2e2e"></div>
<div style="left:1313px;top:304.5px;width:28px;height:27px;background:#ee5519;border-radius:5px;transform:rotate(-14deg)"></div>
<span class="t" style="left:1315.5px;top:301.5px;height:35px;line-height:35px;font-size:25px;color:#ffffff;font-weight:700;transform:rotate(-14deg) scaleX(1.35);transform-origin:50% 50%;width:22px;text-align:center;">S</span>
<span class="t" style="left:1349.5px;top:310.0px;height:21px;line-height:21px;font-size:15px;color:#ececec;font-weight:700;">英</span>
<svg style="left:1373px;top:312px" width="16" height="16" viewBox="0 0 16 16" fill="none" ><path d="M10.5 0.8 A7.8 7.8 0 1 1 1 11.6 A7.6 7.6 0 0 0 10.5 0.8 Z" fill="#eeeeee"/></svg>
<svg style="left:1398px;top:313px" width="14" height="14" viewBox="0 0 14 14" fill="none" ><circle cx="3" cy="3.5" r="1.7" fill="#eee"/><circle cx="10.5" cy="6.6" r="1.8" fill="#eee"/><path d="M12.3 6.4 q0.3 3.4 -3 5.2 q1.6 -2 1.2 -4 Z" fill="#eee"/></svg>
<svg style="left:1421px;top:312px" width="17" height="17" viewBox="0 0 17 17" fill="none" ><circle cx="8.5" cy="8.5" r="8" fill="#fff"/><circle cx="5.7" cy="6.4" r="1.2" fill="#1c1c1c"/><circle cx="11.3" cy="6.4" r="1.2" fill="#1c1c1c"/><path d="M4.2 9.6 a4.4 4.4 0 0 0 8.6 0 Z" fill="#1c1c1c"/></svg>
<svg style="left:1447px;top:311px" width="12" height="19" viewBox="0 0 12 19" fill="none" ><rect x="3" y="0.5" width="6" height="11" rx="3" fill="#fff"/><path d="M0.8 8 a5.2 5.2 0 0 0 10.4 0 M6 13.4 V17 M3 17.6 H9" stroke="#fff" stroke-width="1.5" fill="none"/></svg>
<svg style="left:1470px;top:314px" width="17" height="13" viewBox="0 0 17 13" fill="none" ><rect x="0.5" y="0.5" width="16" height="12" rx="1.5" fill="#fff"/><path d="M2.5 3.5 H14.5 M2.5 6.3 H14.5" stroke="#1c1c1c" stroke-width="1.5" stroke-dasharray="2 1.3"/><path d="M4.5 9.6 H12.5" stroke="#1c1c1c" stroke-width="1.5"/></svg>
<svg style="left:1494px;top:311px" width="18" height="18" viewBox="0 0 18 18" fill="none" ><circle cx="7" cy="5" r="4" fill="#fff"/><path d="M0.5 16.5 a6.5 6.5 0 0 1 13 0 Z" fill="#fff"/><rect x="9" y="10" width="9" height="7" rx="1" fill="#fff" stroke="#1c1c1c" stroke-width="0.8"/></svg>
<svg style="left:1517px;top:308px" width="22" height="22" viewBox="0 0 22 22" fill="none" ><defs><linearGradient id="tg" x1="0" y1="0" x2="1" y2="1"><stop offset="0" stop-color="#ff5fa8"/><stop offset="1" stop-color="#6a6bff"/></linearGradient></defs><path d="M2 6 L7 4 Q10 7 13 4 L18 6 L16.5 10 L14.5 9.5 V18 H5.5 V9.5 L3.5 10 Z" fill="url(#tg)"/><circle cx="17" cy="3.6" r="3" fill="#ff4b3a"/></svg>
<svg style="left:1542px;top:313px" width="15" height="15" viewBox="0 0 15 15" fill="none" ><rect x="0.5" y="0.5" width="6" height="6" rx="1.3" fill="#fff"/><rect x="8.5" y="0.5" width="6" height="6" rx="1.3" fill="#fff"/><rect x="0.5" y="8.5" width="6" height="6" rx="1.3" fill="#fff"/><rect x="8.5" y="8.5" width="6" height="6" rx="1.3" fill="#fff"/></svg>
</div>
<div class="statusbar" style="left:0;top:1001px;width:1920px;height:30px;background:#007acc">
<div style="left:0px;top:0px;width:49px;height:30px;background:#16825d;"></div>
<svg style="left:17px;top:7px" width="15" height="17" viewBox="0 0 15 17" fill="none" ><path d="M1.5 5 L6.5 10 L1.5 15 M13.5 1.5 L8.5 6.5 L13.5 11.5" stroke="#ffffff" stroke-width="1.45" stroke-linejoin="miter"/></svg>
<svg style="left:58px;top:6px" width="18" height="21" viewBox="0 0 18 21" fill="none" ><circle cx="4" cy="16.4" r="2.6" stroke="#ffffff" stroke-width="1.5"/><circle cx="14" cy="4.4" r="2.6" stroke="#ffffff" stroke-width="1.5"/><path d="M4 1.5 V13.6" stroke="#ffffff" stroke-width="1.55" stroke-linecap="round"/><path d="M13.8 7.2 C13.8 12 4.3 10.4 4.1 13.8" stroke="#ffffff" stroke-width="1.55"/></svg>
<span class="t" style="left:82px;top:4.8px;height:25px;line-height:25px;font-size:17.6px;color:#ffffff;letter-spacing:-0.250px;">master*</span>
<svg style="left:151px;top:7px" width="20" height="18" viewBox="0 0 20 18" fill="none" ><path d="M5.4 13.6 H4.8 a3.8 3.8 0 0 1 -0.4 -7.5 a5.6 5.6 0 0 1 10.9 0.6 a3.5 3.5 0 0 1 0.2 6.9 H14.4" stroke="#ffffff" stroke-width="1.55" stroke-linecap="round"/><path d="M10 16.6 V8.6 M6.8 11.4 L10 8.2 L13.2 11.4" stroke="#ffffff" stroke-width="1.55"/></svg>
<svg style="left:191px;top:5px" width="19" height="23" viewBox="0 0 19 23" fill="none" ><circle cx="5" cy="4" r="2.7" stroke="#ffffff" stroke-width="1.5"/><circle cx="5" cy="19" r="2.7" stroke="#ffffff" stroke-width="1.5"/><circle cx="14.6" cy="11" r="2.7" stroke="#ffffff" stroke-width="1.5"/><path d="M5 6.8 V16.2 M11 0.8 V8.6 M11 13.6 V22" stroke="#ffffff" stroke-width="1.5"/><path d="M11 11 H12" stroke="#ffffff" stroke-width="1.5"/></svg>
<svg style="left:234px;top:6px" width="20" height="21" viewBox="0 0 20 21" fill="none" ><path d="M8 14.5 L5.5 12 C7 6 11 2.2 18.4 1.6 C17.8 9 14 13 8 14.5 Z" stroke="#ffffff" stroke-width="1.5" stroke-linejoin="round"/><path d="M6.4 9 L1.6 9.6 L1.6 14 M11 13.6 L10.4 18.4 L6 18.4" stroke="#ffffff" stroke-width="1.5" stroke-linejoin="round"/><path d="M1.5 16.5 V19.5 H4.5" stroke="#ffffff" stroke-width="1.5"/></svg>
<svg style="left:255px;top:7px" width="18" height="18" viewBox="0 0 18 18" fill="none" ><rect x="8.6" y="1.6" width="8" height="5.6" rx="2.8" transform="rotate(-45 12.6 4.4)" stroke="#ffffff" stroke-width="1.5"/><rect x="1.4" y="10.8" width="8" height="5.6" rx="2.8" transform="rotate(-45 5.4 13.6)" stroke="#ffffff" stroke-width="1.5"/><path d="M6.4 11.6 L11.6 6.4" stroke="#ffffff" stroke-width="1.5"/></svg>
<span class="t" style="left:279px;top:4.8px;height:25px;line-height:25px;font-size:17.6px;color:#ffffff;letter-spacing:-0.597px;">Launchpad</span>
<span class="t" style="left:385px;top:4.8px;height:25px;line-height:25px;font-size:17.6px;color:#ffffff;letter-spacing:0.062px;">demo-2</span>
<svg style="left:469px;top:7px" width="18" height="18" viewBox="0 0 18 18" fill="none" ><circle cx="9" cy="9" r="8" stroke="#ffffff" stroke-width="1.5"/><path d="M5.6 5.6 L12.4 12.4 M12.4 5.6 L5.6 12.4" stroke="#ffffff" stroke-width="1.5"/></svg>
<span class="t" style="left:493px;top:4.8px;height:25px;line-height:25px;font-size:17.6px;color:#ffffff;">0</span>
<svg style="left:508.5px;top:7px" width="18" height="17" viewBox="0 0 18 17" fill="none" ><path d="M9 1.4 L16.8 15.6 H1.2 Z" stroke="#ffffff" stroke-width="1.5" stroke-linejoin="round"/><path d="M9 6 V10.8" stroke="#ffffff" stroke-width="1.45"/><circle cx="9" cy="13" r="1" fill="#ffffff"/></svg>
<span class="t" style="left:532.5px;top:4.8px;height:25px;line-height:25px;font-size:17.6px;color:#ffffff;">0</span>
<svg style="left:565px;top:5px" width="21" height="22" viewBox="0 0 21 22" fill="none" ><path d="M3 2.5 C0.5 4 0.8 9 3 12.5 C4 14 5 13.5 5.4 12 L6.2 9 L6.2 14 C6.2 18 7 21 9.6 21 C12 21 12.4 18.6 12.4 16 L12.6 13.4 C14 14.4 16.4 14 17.8 12.8 C17 12.4 16 12.4 15.6 11.6 C19 10 21 3.6 17 1.8 C14.6 0.8 12.4 1.6 11.4 2.2 C9 0.8 5.4 1 3 2.5 Z" fill="#e6eef5" stroke="#cfe0ee" stroke-width="0.8"/><path d="M11.2 2.6 C13 5 13 9 12.6 13" stroke="#6f9fc4" stroke-width="1" fill="none"/><circle cx="9" cy="6" r="0.9" fill="#336791"/></svg>
<span class="t" style="left:590.5px;top:4.8px;height:25px;line-height:25px;font-size:17.6px;color:#ffffff;letter-spacing:-0.985px;">127.0.0.1</span>
<svg style="left:663.5px;top:7px" width="16" height="18" viewBox="0 0 16 18" fill="none" ><ellipse cx="8" cy="3.6" rx="6.6" ry="2.6" stroke="#ffffff" stroke-width="1.5"/><path d="M1.4 3.6 V14.4 a6.6 2.6 0 0 0 13.2 0 V3.6" stroke="#ffffff" stroke-width="1.5"/></svg>
<span class="t" style="left:686.5px;top:4.8px;height:25px;line-height:25px;font-size:17.6px;color:#ffffff;letter-spacing:-0.274px;">langchain</span>
<span class="t" style="left:1148px;top:4.8px;height:25px;line-height:25px;font-size:17.6px;color:#ffffff;letter-spacing:-0.498px;">Cursor Tab</span>
<div style="left:1241px;top:0px;width:49px;height:30px;background:#004a7c;"></div>
<svg style="left:1256px;top:6px" width="20" height="20" viewBox="0 0 20 20" fill="none" ><circle cx="7.6" cy="7.6" r="6.4" stroke="#ffffff" stroke-width="1.45"/><path d="M12.4 12.4 L18.4 18.4" stroke="#ffffff" stroke-width="1.8" stroke-linecap="round"/><path d="M4.4 7.6 H10.8" stroke="#ffffff" stroke-width="1.55"/></svg>
<span class="t" style="left:1301px;top:5.3px;height:24px;line-height:24px;font-size:17.3px;color:#ffffff;letter-spacing:-0.171px;">行 5，列 42</span>
<span class="t" style="left:1413px;top:5.3px;height:24px;line-height:24px;font-size:17.3px;color:#ffffff;letter-spacing:-0.174px;">空格: 4</span>
<span class="t" style="left:1489px;top:4.8px;height:25px;line-height:25px;font-size:17.6px;color:#ffffff;letter-spacing:-0.854px;">UTF-8</span>
<span class="t" style="left:1557px;top:4.8px;height:25px;line-height:25px;font-size:17.6px;color:#ffffff;letter-spacing:-2.272px;">CRLF</span>
<span class="t" style="left:1617px;top:5.3px;height:22px;line-height:22px;font-size:15.5px;color:#ffffff;font-weight:700;letter-spacing:-0.150px;">{ }</span>
<span class="t" style="left:1644px;top:4.8px;height:25px;line-height:25px;font-size:17.6px;color:#ffffff;letter-spacing:-0.762px;">TypeScript JSX</span>
<svg style="left:1775px;top:6px" width="17" height="20" viewBox="0 0 17 20" fill="none" ><circle cx="8.5" cy="8" r="7.2" stroke="#ffffff" stroke-width="1.5"/><circle cx="8.5" cy="8" r="3.4" stroke="#ffffff" stroke-width="1.4"/><path d="M8.5 8.2 L6.2 19.4 H10.8 Z" fill="#ffffff" stroke="#007acc" stroke-width="0.8"/></svg>
<span class="t" style="left:1798px;top:4.8px;height:25px;line-height:25px;font-size:17.6px;color:#ffffff;letter-spacing:-0.560px;">Go Live</span>
<svg style="left:1879px;top:6px" width="19" height="20" viewBox="0 0 19 20" fill="none" ><path d="M9.5 1.6 C5.4 1.6 3.8 4.6 3.8 8 V12 L1.8 15 H17.2 L15.2 12 V8 C15.2 4.6 13.6 1.6 9.5 1.6 Z" stroke="#ffffff" stroke-width="1.5" stroke-linejoin="round"/><path d="M7.6 17.2 a2 2 0 0 0 3.8 0" stroke="#ffffff" stroke-width="1.5"/></svg>
</div>
</body></html>
